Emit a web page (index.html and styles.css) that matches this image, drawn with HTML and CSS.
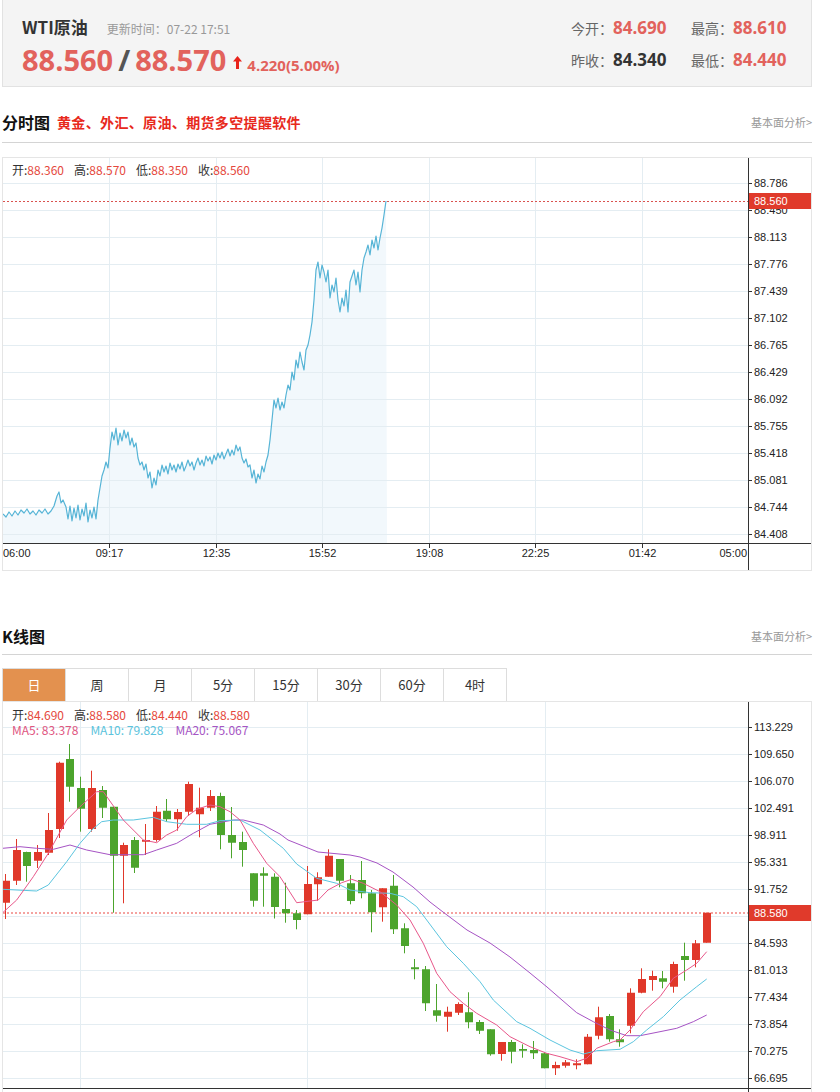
FILE: index.html
```html
<!DOCTYPE html>
<html lang="zh-CN">
<head>
<meta charset="utf-8">
<title>WTI原油</title>
<link rel="stylesheet" href="styles.css">
</head>
<body>
<div class="page">
  <div class="quote">
    <div class="q-left">
      <div class="q-title"><span class="q-name">WTI原油</span><span class="q-time">更新时间：07-22 17:51</span></div>
      <div class="q-price">
        <span class="big">88.560</span><span class="slash">/</span><span class="big">88.570</span>
        <svg class="arrow" width="9" height="13" viewBox="0 0 9 13"><path d="M4.5 0L9 5.5H6V13H3V5.5H0Z"/></svg>
        <span class="chg">4.220(5.00%)</span>
      </div>
    </div>
    <div class="q-right">
      <div class="q-row">
        <div class="q-item"><span class="lbl">今开：</span><span class="val">84.690</span></div>
        <div class="q-item"><span class="lbl">最高：</span><span class="val">88.610</span></div>
      </div>
      <div class="q-row">
        <div class="q-item"><span class="lbl">昨收：</span><span class="val dark">84.340</span></div>
        <div class="q-item"><span class="lbl">最低：</span><span class="val">84.440</span></div>
      </div>
    </div>
  </div>

  <div class="sec-head">
    <div class="sec-left"><h2 class="sec-title">分时图</h2><span class="promo">黄金、外汇、原油、期货多空提醒软件</span></div>
    <a class="more">基本面分析&gt;</a>
  </div>

  <div class="chart chart1">
    <svg width="808" height="412" viewBox="3 158 808 412">
      <polygon class="area" points="3,514 6,517 9,512 12,516 15,511 18,515 21,510 24,513 27,509 30,514 33,511 36,515 39,510 42,513 45,509 48,514 51,511 54,506 57,496 59,492 61,503 63,500 66,507 68,519 70,506 72,521 74,508 76,518 78,505 80,520 82,509 84,516 86,503 88,522 90,510 92,518 94,507 96,519 98,500 100,488 102,476 104,470 106,462 108,468 110,448 112,432 114,440 116,428 118,445 120,433 122,441 124,430 126,438 128,432 130,445 132,438 134,447 136,443 138,458 140,465 142,462 144,470 146,464 148,478 150,472 152,488 154,478 156,485 158,470 160,476 162,465 164,472 166,466 168,474 170,463 172,470 174,465 176,472 178,464 180,469 182,462 184,471 186,466 188,460 190,466 192,462 194,470 196,463 198,458 200,465 202,460 204,466 206,456 208,461 210,457 212,464 214,455 216,460 218,453 220,458 222,452 224,459 226,454 228,449 230,456 232,450 234,455 236,445 238,451 240,447 242,458 244,463 246,459 248,467 250,465 252,478 254,470 256,483 258,474 260,479 262,466 264,472 266,462 268,455 270,440 272,420 274,400 276,408 278,398 280,410 282,402 284,408 286,395 288,385 290,390 292,372 294,380 296,360 298,368 300,352 302,362 304,370 306,350 308,345 310,335 312,322 314,300 316,270 318,262 320,278 322,265 324,272 326,282 328,270 330,298 332,285 334,292 336,278 338,300 340,312 342,298 344,306 346,290 348,312 350,282 352,276 354,270 356,285 358,272 360,292 362,270 364,258 366,252 368,245 370,255 372,240 374,248 376,236 378,250 380,238 382,228 384,215 386,201 387,543 3,543"/>
      <path class="grid" d="M3 183.5H748M3 210.5H748M3 237.5H748M3 264.5H748M3 291.5H748M3 318.5H748M3 345.5H748M3 372.5H748M3 399.5H748M3 426.5H748M3 453.5H748M3 480.5H748M3 507.5H748M3 534.5H748M109.5 158V543M216.5 158V543M322.5 158V543M429.5 158V543M535.5 158V543M642.5 158V543"/>
      <polyline class="price" points="3,514 6,517 9,512 12,516 15,511 18,515 21,510 24,513 27,509 30,514 33,511 36,515 39,510 42,513 45,509 48,514 51,511 54,506 57,496 59,492 61,503 63,500 66,507 68,519 70,506 72,521 74,508 76,518 78,505 80,520 82,509 84,516 86,503 88,522 90,510 92,518 94,507 96,519 98,500 100,488 102,476 104,470 106,462 108,468 110,448 112,432 114,440 116,428 118,445 120,433 122,441 124,430 126,438 128,432 130,445 132,438 134,447 136,443 138,458 140,465 142,462 144,470 146,464 148,478 150,472 152,488 154,478 156,485 158,470 160,476 162,465 164,472 166,466 168,474 170,463 172,470 174,465 176,472 178,464 180,469 182,462 184,471 186,466 188,460 190,466 192,462 194,470 196,463 198,458 200,465 202,460 204,466 206,456 208,461 210,457 212,464 214,455 216,460 218,453 220,458 222,452 224,459 226,454 228,449 230,456 232,450 234,455 236,445 238,451 240,447 242,458 244,463 246,459 248,467 250,465 252,478 254,470 256,483 258,474 260,479 262,466 264,472 266,462 268,455 270,440 272,420 274,400 276,408 278,398 280,410 282,402 284,408 286,395 288,385 290,390 292,372 294,380 296,360 298,368 300,352 302,362 304,370 306,350 308,345 310,335 312,322 314,300 316,270 318,262 320,278 322,265 324,272 326,282 328,270 330,298 332,285 334,292 336,278 338,300 340,312 342,298 344,306 346,290 348,312 350,282 352,276 354,270 356,285 358,272 360,292 362,270 364,258 366,252 368,245 370,255 372,240 374,248 376,236 378,250 380,238 382,228 384,215 386,201"/>
      <path class="last1" d="M3 201.5H748"/>
      <path class="axis" d="M748.5 158V570M3 543.5H811"/>
      <path class="axis" d="M748 183.5h4M748 210.5h4M748 237.5h4M748 264.5h4M748 291.5h4M748 318.5h4M748 345.5h4M748 372.5h4M748 399.5h4M748 426.5h4M748 453.5h4M748 480.5h4M748 507.5h4M748 534.5h4M109.5 543v5M216.5 543v5M322.5 543v5M429.5 543v5M535.5 543v5M642.5 543v5"/>
      <text class="info" x="12" y="175"><tspan class="il">开:</tspan><tspan class="iv">88.360</tspan><tspan class="il" dx="10">高:</tspan><tspan class="iv">88.570</tspan><tspan class="il" dx="10">低:</tspan><tspan class="iv">88.350</tspan><tspan class="il" dx="10">收:</tspan><tspan class="iv">88.560</tspan></text>
      <g class="ax">
        <text x="754" y="187">88.786</text>
        <text x="754" y="214">88.450</text>
        <text x="754" y="241">88.113</text>
        <text x="754" y="268">87.776</text>
        <text x="754" y="295">87.439</text>
        <text x="754" y="322">87.102</text>
        <text x="754" y="349">86.765</text>
        <text x="754" y="376">86.429</text>
        <text x="754" y="403">86.092</text>
        <text x="754" y="430">85.755</text>
        <text x="754" y="457">85.418</text>
        <text x="754" y="484">85.081</text>
        <text x="754" y="511">84.744</text>
        <text x="754" y="538">84.408</text>
        <text x="3" y="557">06:00</text>
        <text x="109.5" y="557" text-anchor="middle">09:17</text>
        <text x="216.5" y="557" text-anchor="middle">12:35</text>
        <text x="322.5" y="557" text-anchor="middle">15:52</text>
        <text x="429.5" y="557" text-anchor="middle">19:08</text>
        <text x="535.5" y="557" text-anchor="middle">22:25</text>
        <text x="642.5" y="557" text-anchor="middle">01:42</text>
        <text x="747" y="557" text-anchor="end">05:00</text>
      </g>
      <rect class="tag" x="749" y="193" width="62" height="16"/>
      <text class="tagtxt" x="754" y="205">88.560</text>
    </svg>
  </div>

  <div class="sec-head sec-k">
    <div class="sec-left"><h2 class="sec-title">K线图</h2></div>
    <a class="more">基本面分析&gt;</a>
  </div>

  <div class="tabs">
    <div class="tab active">日</div>
    <div class="tab">周</div>
    <div class="tab">月</div>
    <div class="tab">5分</div>
    <div class="tab">15分</div>
    <div class="tab">30分</div>
    <div class="tab">60分</div>
    <div class="tab">4时</div>
  </div>

  <div class="chart chart2">
    <svg width="808" height="392" viewBox="3 702 808 392">
      <defs><clipPath id="plot"><rect x="3" y="702" width="745" height="386"/></clipPath></defs>
      <path class="grid" d="M3 727.5H748M3 754.5H748M3 781.5H748M3 808.5H748M3 835.5H748M3 862.5H748M3 889.5H748M3 916.5H748M3 943.5H748M3 970.5H748M3 997.5H748M3 1024.5H748M3 1051.5H748M3 1078.5H748M80.5 702V1088M307.5 702V1088M545.5 702V1088"/>
      <path class="last2" d="M3 913H748"/>
      <g clip-path="url(#plot)">
        <path class="wick up" d="M5.5 874V919M16.5 839V885M37.5 845V868M48.5 813V855M59.5 761.7V838M91.5 770.7V831.7M123.5 842.7V903.3M145.5 824V855M156.5 806V841.7M177.5 809V830.7M188.5 781.7V816M199.5 787.7V837.3M210.5 790V811M307.5 866V914.3M317.5 872.3V900.7M328.5 849.3V876.7M382.5 888.3V921.7M447.5 1006.7V1031.7M458.5 1002.3V1015M501.5 1042V1060.7M555.5 1061.7V1075M565.5 1060V1067.7M576.5 1059.3V1069.3M587.5 1034V1064.3M598.5 1006.7V1039.3M630.5 988.3V1033.3M641.5 968.3V993.3M652.5 970.7V990.7M673.5 961.7V992.7M695.5 940V967.3M706.5 912.7V942.7"/>
        <path class="body up" d="M2 880.7h8v22h-8zM13 850h8v30.7h-8zM34 852h8v8.7h-8zM45 830h8v22.7h-8zM56 762.7h8v66.3h-8zM88 788h8v41h-8zM120 845h8v10.7h-8zM142 840h8v1.7h-8zM153 811.7h8v28.3h-8zM174 812h8v7.3h-8zM185 784h8v27.7h-8zM196 807.7h8v6.6h-8zM207 796h8v11.7h-8zM304 884h8v30.3h-8zM314 877.3h8v7h-8zM325 855.7h8v21h-8zM379 888.3h8v19h-8zM444 1011.7h8v5h-8zM455 1004h8v8.7h-8zM498 1042h8v12h-8zM552 1065h8v3.3h-8zM562 1062.3h8v3.4h-8zM573 1063.3h8v2h-8zM584 1036.7h8v27.6h-8zM595 1017.3h8v18.4h-8zM627 992.7h8v33h-8zM638 979h8v13.7h-8zM649 976h8v4h-8zM670 964h8v22.7h-8zM692 943.3h8v16.7h-8zM703 912.7h8v30h-8z"/>
        <path class="wick dn" d="M26.5 851.7V881.7M69.5 744V801.7M80.5 776.7V831.7M102.5 786V818M113.5 806.7V912.7M134.5 837V873M166.5 799V821.7M220.5 792.7V849.3M231.5 807V858.3M242.5 831.7V866.7M253.5 873.3V906.7M263.5 867.3V906.7M274.5 873.3V918.5M285.5 882.7V922.7M296.5 910V929.3M339.5 859V887.3M350.5 875V904.3M361.5 861V898.3M371.5 890V932.3M393.5 875V934M404.5 923.3V953.3M414.5 959V979.3M425.5 966V1011M436.5 984V1021.7M468.5 992.3V1028.3M479.5 1020V1034M490.5 1029.3V1055.7M511.5 1040V1063.3M522.5 1044.3V1057.7M533.5 1041V1059M544.5 1052.3V1068.3M609.5 1014V1041.7M619.5 1029.3V1046.7M662.5 971V988.3M684.5 942.7V980.7"/>
        <path class="body dn" d="M23 852h8v14h-8zM66 759h8v27.7h-8zM77 788h8v20.7h-8zM99 790h8v17.7h-8zM110 806.7h8v49h-8zM131 840h8v27.7h-8zM163 810.7h8v8.6h-8zM217 796h8v39h-8zM228 835h8v7.7h-8zM239 842h8v8h-8zM250 873.3h8v27.4h-8zM260 873.3h8v2.4h-8zM271 876.7h8v30.3h-8zM282 909h8v4.3h-8zM293 913.3h8v6.7h-8zM336 859h8v21.7h-8zM347 883.3h8v17.7h-8zM358 880h8v13.3h-8zM368 893.3h8v19h-8zM390 885.7h8v43.6h-8zM401 928.3h8v17.7h-8zM411 967.3h8v2h-8zM422 969.3h8v34h-8zM433 1010.3h8v5.4h-8zM465 1012.3h8v10h-8zM476 1022h8v8.7h-8zM487 1029.3h8v25h-8zM508 1042h8v9.7h-8zM519 1049h8v1.7h-8zM530 1050h8v3.3h-8zM541 1053.3h8v15h-8zM606 1016h8v23.3h-8zM616 1039.3h8v3h-8zM659 978.3h8v3.4h-8zM681 956h8v4h-8z"/>
        <polyline class="ma20" points="2.7,848.3 20,846.7 36.7,848.3 53.3,849.3 70,845 86.7,850 110,854.7 143.3,854.7 156.7,850 176.7,843.3 193.3,833.3 210,824.3 233.3,820 243.3,820 263.3,825 280,834 288,840 318,852 350,855 360,857 377,863 393,872 413,887 430,902 443,912 467,930 490,943 510,957 530,973 547,987 560,998.3 576.7,1012.7 593.3,1021.7 610,1030 626.7,1035.7 640,1035.7 660,1031.7 676.7,1028.3 693.3,1021.7 706.7,1015"/>
        <polyline class="ma10" points="2.7,889.3 36.7,891 48.3,885 66.7,861.7 80,843.3 91.7,830 101.7,821.7 113.3,820 133.3,820 153.3,817.3 166.7,821.7 186.7,824.3 206.7,824.3 220,820.7 240,820 260,830 283.3,848.3 296.7,864 316.7,878.3 336.7,883.3 350,890 370,892.7 390,893.3 403.3,896.7 416.7,906.7 426.7,920 446.7,946.7 463.3,963.3 480,981.7 493.3,1000 516.7,1021.7 530,1028.3 550,1040 560,1045 570,1050 583.3,1054 596.7,1050.7 620,1049.3 633.3,1041.7 646.7,1030 663.3,1016.7 680,1000 696.7,986.7 706.7,979"/>
        <polyline class="ma5" points="2.7,912.7 16.7,900 33.3,876.7 48.3,853.3 66.7,820 80,806.7 96.7,791.7 103.3,791.7 123.3,820 143.3,840 156.7,842.7 166.7,835 176.7,830 186.7,816.7 196.7,809.3 210,805 220,806.7 230,811.7 240,820 253.3,843.3 266.7,863.3 280,876.7 296.7,902.7 318.3,900 328,890 341.7,882.7 351.7,879.3 363.3,883.3 380,891.7 396.7,905 410,920 423.3,943.3 436.7,973.3 450,991.7 463.3,1003.3 476.7,1013.3 496.7,1025 510,1036.7 530,1046.7 546.7,1053.3 560,1056.7 576.7,1061.7 586.7,1058.3 596.7,1048.3 613.3,1041.7 620,1040 630,1030 643.3,1011.7 660,996.7 673.3,978.3 686.7,970 696.7,963.3 706.7,951.7"/>
      </g>
      <path class="axis" d="M748.5 702V1094M3 1088.5H811"/>
      <path class="axis" d="M748 727.5h4M748 754.5h4M748 781.5h4M748 808.5h4M748 835.5h4M748 862.5h4M748 889.5h4M748 916.5h4M748 943.5h4M748 970.5h4M748 997.5h4M748 1024.5h4M748 1051.5h4M748 1078.5h4"/>
      <text class="info" x="12" y="720"><tspan class="il">开:</tspan><tspan class="iv">84.690</tspan><tspan class="il" dx="10">高:</tspan><tspan class="iv">88.580</tspan><tspan class="il" dx="10">低:</tspan><tspan class="iv">84.440</tspan><tspan class="il" dx="10">收:</tspan><tspan class="iv">88.580</tspan></text>
      <text class="info" x="12" y="735"><tspan class="c5">MA5: 83.378</tspan><tspan class="c10" dx="12">MA10: 79.828</tspan><tspan class="c20" dx="12">MA20: 75.067</tspan></text>
      <g class="ax">
        <text x="754" y="731">113.229</text>
        <text x="754" y="758">109.650</text>
        <text x="754" y="785">106.070</text>
        <text x="754" y="812">102.491</text>
        <text x="754" y="839">98.911</text>
        <text x="754" y="866">95.331</text>
        <text x="754" y="893">91.752</text>
        <text x="754" y="947">84.593</text>
        <text x="754" y="974">81.013</text>
        <text x="754" y="1001">77.434</text>
        <text x="754" y="1028">73.854</text>
        <text x="754" y="1055">70.275</text>
        <text x="754" y="1082">66.695</text>
      </g>
      <rect class="tag" x="749" y="905" width="62" height="16"/>
      <text class="tagtxt" x="754" y="917">88.580</text>
    </svg>
  </div>
</div>
</body>
</html>
```

FILE: styles.css
```css
html, body {
  margin: 0;
  padding: 0;
  background: #fff;
}
body {
  font-family: "Noto Sans CJK SC", "Microsoft YaHei", sans-serif;
  color: #333;
}
.page {
  width: 810px;
  margin-left: 2px;
}

/* quote header */
.quote {
  height: 86px;
  background: #f4f4f4;
  border: 1px solid #e2e2e2;
  border-top: 0;
  display: flex;
  justify-content: space-between;
}
.q-left {
  padding: 14px 0 0 19px;
}
.q-title {
  display: flex;
  align-items: baseline;
  height: 26px;
  line-height: 26px;
}
.q-name {
  font-size: 17px;
  font-weight: 700;
  color: #333;
}
.q-time {
  font-size: 12px;
  color: #999;
  margin-left: 19px;
}
.q-price {
  display: flex;
  align-items: baseline;
  height: 38px;
  line-height: 38px;
  margin-top: 1px;
  font-family: "Open Sans", "Noto Sans CJK SC", sans-serif;
  font-weight: 700;
  white-space: nowrap;
}
.big {
  font-size: 29px;
  color: #e2625c;
}
.slash {
  font-size: 29px;
  color: #555;
  margin: 0 5px;
}
.arrow {
  fill: #e8231b;
  margin: 0 5px 0 7px;
  align-self: center;
  position: relative;
  top: 2px;
}
.chg {
  font-size: 15px;
  color: #e2625c;
}
.q-right {
  width: 240px;
  padding-top: 15px;
  display: flex;
  flex-direction: column;
  gap: 6px;
}
.q-row {
  display: flex;
  height: 26px;
  line-height: 26px;
}
.q-item {
  width: 120px;
  display: flex;
  align-items: baseline;
  white-space: nowrap;
}
.lbl {
  flex: 0 0 42px;
  font-size: 14px;
  color: #666;
}
.val {
  font-family: "Open Sans", "Noto Sans CJK SC", sans-serif;
  font-size: 17px;
  font-weight: 700;
  color: #e2625c;
}
.val.dark {
  color: #333;
}

/* section heads */
.sec-head {
  display: flex;
  justify-content: space-between;
  align-items: center;
  height: 24px;
  padding: 23px 0 8px;
  border-bottom: 1px solid #d4d4d4;
}
.sec-k {
  padding: 53px 0 6px;
}
.sec-left {
  display: flex;
  align-items: center;
}
.sec-title {
  margin: 0;
  font-size: 16px;
  font-weight: 700;
  color: #111;
  line-height: 24px;
}
.promo {
  margin-left: 7px;
  font-size: 14px;
  letter-spacing: 0.35px;
  font-weight: 700;
  color: #e8291c;
}
.more {
  font-size: 11px;
  color: #999;
  text-decoration: none;
}

/* charts */
.chart {
  border: 1px solid #e5e5e5;
}
.chart svg {
  display: block;
}
.chart1 {
  margin-top: 14px;
}
.chart2 {
  height: 400px;
  overflow: hidden;
}
.area {
  fill: #f2f8fc;
}
.grid {
  stroke: #e4edf2;
  stroke-width: 1;
  fill: none;
}
.price {
  fill: none;
  stroke: #56b4d6;
  stroke-width: 1.2;
  stroke-linejoin: round;
}
.last1 {
  stroke: #d9534f;
  stroke-width: 1;
  stroke-dasharray: 2 2;
}
.last2 {
  stroke: #f4a3a0;
  stroke-width: 2;
  stroke-dasharray: 2 2;
}
.axis {
  stroke: #333;
  stroke-width: 1;
  fill: none;
}
.ax {
  font-family: "Liberation Sans", Arial, sans-serif;
  font-size: 11px;
  fill: #222;
}
.tag {
  fill: #e03a2b;
}
.tagtxt {
  font-family: "Liberation Sans", Arial, sans-serif;
  font-size: 11px;
  fill: #fff;
}
.info {
  font-family: "Noto Sans CJK SC", sans-serif;
  font-size: 12px;
}
.il {
  fill: #333;
}
.iv {
  fill: #e5483c;
}
.c5 { fill: #e0567f; }
.c10 { fill: #5bc3dc; }
.c20 { fill: #a656c4; }

.wick {
  fill: none;
  stroke-width: 1;
}
.wick.up { stroke: #e0382a; }
.wick.dn { stroke: #4ca42c; }
.body.up { fill: #e0382a; }
.body.dn { fill: #4ca42c; }
.ma5, .ma10, .ma20 {
  fill: none;
  stroke-width: 1;
  stroke-linejoin: round;
}
.ma5 { stroke: #e8578a; }
.ma10 { stroke: #5cc5df; }
.ma20 { stroke: #a653c4; }

/* tabs */
.tabs {
  display: flex;
  width: fit-content;
  margin-top: 13px;
  border-left: 1px solid #ddd;
}
.tab {
  width: 62px;
  height: 32px;
  line-height: 32px;
  border-top: 1px solid #ddd;
  border-right: 1px solid #ddd;
  text-align: center;
  font-size: 13px;
  color: #333;
}
.tab.active {
  background: #e3914f;
  color: #fff;
}
```
